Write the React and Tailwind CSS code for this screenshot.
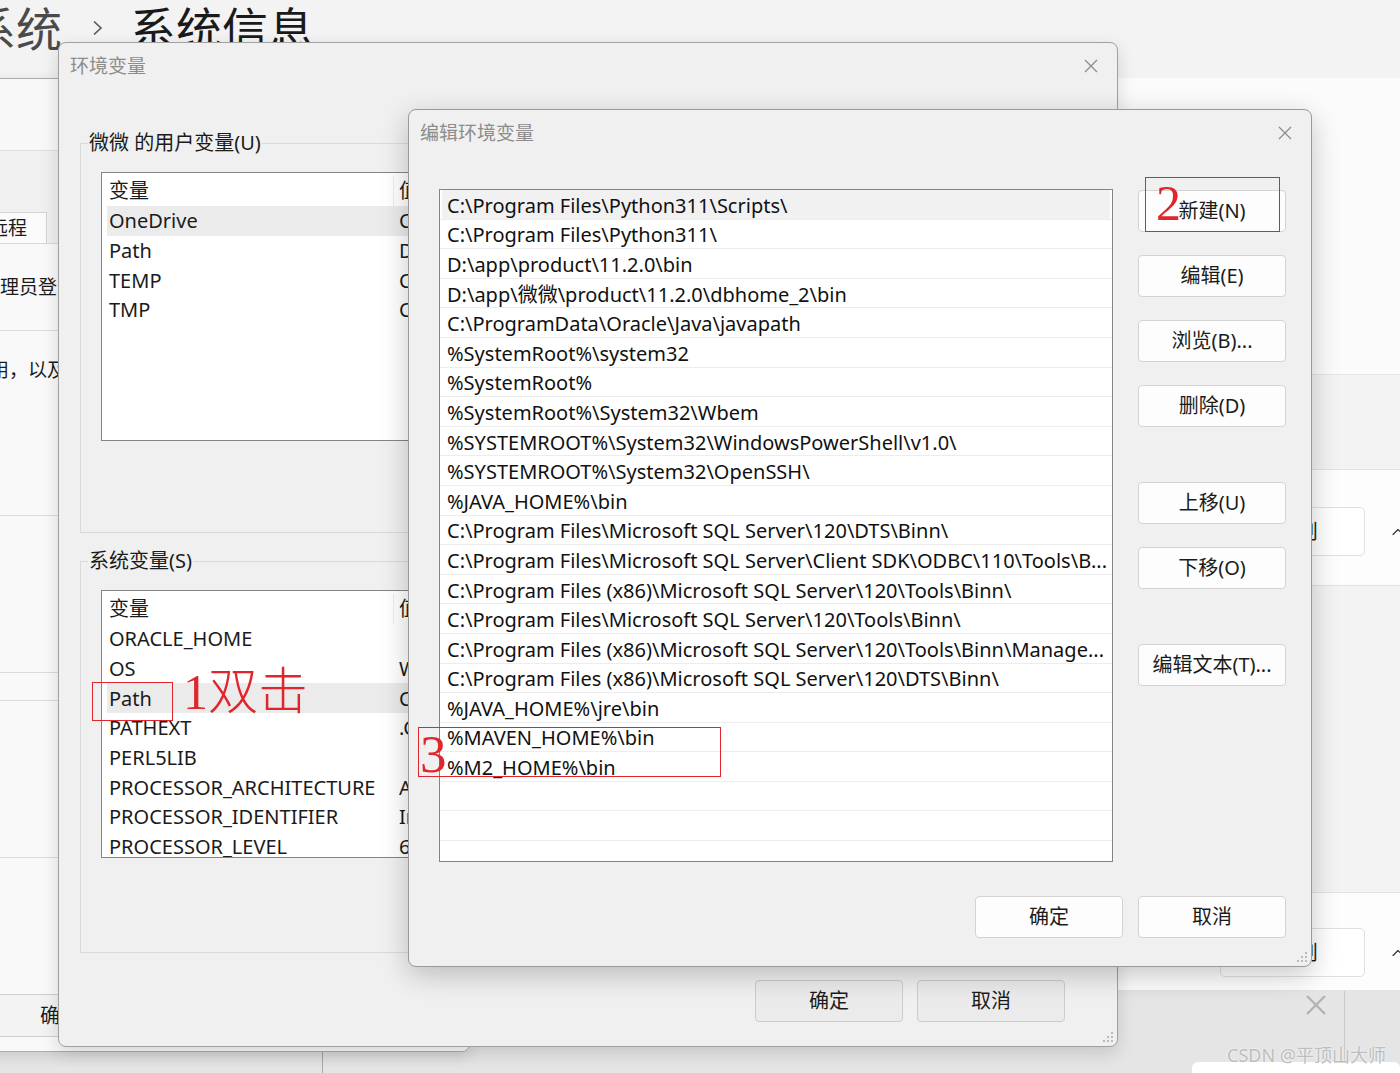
import React from 'react';
import { ChevronUp } from 'lucide-react';

const SANS = "font-['Noto_Sans','Noto_Sans_CJK_SC',sans-serif]";
const SERIF = "font-['Liberation_Serif','Noto_Sans_CJK_SC',serif]";

const userVars = [
  ['OneDrive', 'C:\\Users\\微微\\OneDrive'],
  ['Path', 'D:\\app\\微微\\product\\11.2.0\\dbhome_2\\bin;C:\\Users\\微微\\AppData\\Local\\Microsoft\\WindowsApps;'],
  ['TEMP', 'C:\\Users\\微微\\AppData\\Local\\Temp'],
  ['TMP', 'C:\\Users\\微微\\AppData\\Local\\Temp'],
];

const sysVars = [
  ['ORACLE_HOME', ''],
  ['OS', 'Windows_NT'],
  ['Path', 'C:\\Program Files\\Python311\\Scripts\\;C:\\Program Files\\Python311\\;'],
  ['PATHEXT', '.COM;.EXE;.BAT;.CMD;.VBS;.VBE;.JS;.JSE;.WSF;.WSH;.MSC;.PY;.PYW'],
  ['PERL5LIB', ''],
  ['PROCESSOR_ARCHITECTURE', 'AMD64'],
  ['PROCESSOR_IDENTIFIER', 'Intel64 Family 6 Model 154 Stepping 3, GenuineIntel'],
  ['PROCESSOR_LEVEL', '6'],
];

const paths = [
  'C:\\Program Files\\Python311\\Scripts\\',
  'C:\\Program Files\\Python311\\',
  'D:\\app\\product\\11.2.0\\bin',
  'D:\\app\\微微\\product\\11.2.0\\dbhome_2\\bin',
  'C:\\ProgramData\\Oracle\\Java\\javapath',
  '%SystemRoot%\\system32',
  '%SystemRoot%',
  '%SystemRoot%\\System32\\Wbem',
  '%SYSTEMROOT%\\System32\\WindowsPowerShell\\v1.0\\',
  '%SYSTEMROOT%\\System32\\OpenSSH\\',
  '%JAVA_HOME%\\bin',
  'C:\\Program Files\\Microsoft SQL Server\\120\\DTS\\Binn\\',
  'C:\\Program Files\\Microsoft SQL Server\\Client SDK\\ODBC\\110\\Tools\\B...',
  'C:\\Program Files (x86)\\Microsoft SQL Server\\120\\Tools\\Binn\\',
  'C:\\Program Files\\Microsoft SQL Server\\120\\Tools\\Binn\\',
  'C:\\Program Files (x86)\\Microsoft SQL Server\\120\\Tools\\Binn\\Manage...',
  'C:\\Program Files (x86)\\Microsoft SQL Server\\120\\DTS\\Binn\\',
  '%JAVA_HOME%\\jre\\bin',
  '%MAVEN_HOME%\\bin',
  '%M2_HOME%\\bin',
  '',
  '',
  '',
];

function CloseX() {
  return (
    <svg width="16" height="16" viewBox="0 0 16 16" className="shrink-0">
      <path d="M2 2L14 14M14 2L2 14" stroke="#8a8a8a" strokeWidth="1.2" fill="none" />
    </svg>
  );
}

function Grip() {
  const dots = [[8, 0], [4, 4], [8, 4], [0, 8], [4, 8], [8, 8]];
  return (
    <svg width="10" height="10" viewBox="0 0 10 10">
      {dots.map(([x, y], i) => (
        <rect key={i} x={x} y={y} width="2" height="2" fill="#b9b9b9" />
      ))}
    </svg>
  );
}

function WinButton({ children, dim }) {
  return (
    <div
      className={`w-[148px] h-[42px] shrink-0 flex items-center justify-center rounded-[4px] border text-[20px] text-[#1b1b1b] ${
        dim ? 'bg-[#ebebeb] border-[#cccccc]' : 'bg-[#fdfdfd] border-[#d3d3d3]'
      }`}
    >
      {children}
    </div>
  );
}

function VarList({ rows, selected, className }) {
  return (
    <div className={`w-[960px] bg-white border border-[#848484] overflow-hidden ${className}`}>
      <div className="h-[33px] flex items-center pt-[3px]">
        <div className="w-[292px] shrink-0 h-full flex items-center pl-[7px] border-r border-[#ececec]">变量</div>
        <div className="pl-[5px]">值</div>
      </div>
      {rows.map(([name, value], i) => (
        <div
          key={name + i}
          className={`h-[29.7px] mx-[5px] pt-[1px] flex items-center whitespace-nowrap ${i === selected ? 'bg-[#ebebeb]' : ''}`}
        >
          <div className="w-[287px] shrink-0 pl-[2px]">{name}</div>
          <div className="pl-[5px] shrink-0">{value}</div>
        </div>
      ))}
    </div>
  );
}

function CardRow({ className }) {
  return (
    <div className={`shrink-0 bg-[#fdfdfd] border-y border-[#e2e2e2] ${className}`}>
      <div className="flex items-center gap-[23px] pl-[1220px]">
        <div className="w-[145px] h-[49px] shrink-0 flex items-center justify-center pl-[10px] rounded-[5px] border border-[#e0e0e0] bg-white text-[20px] text-[#1b1b1b]">
          复制
        </div>
        <ChevronUp size={20} strokeWidth={1.4} className="shrink-0 text-[#333]" />
      </div>
    </div>
  );
}

export default function App() {
  return (
    <div className={`relative w-[1400px] h-[1073px] overflow-hidden flex flex-col bg-[#f3f3f3] ${SANS}`}>
      {/* settings app behind everything */}
      <div className="h-[78px] shrink-0 pt-[5px]">
        <div className="flex items-center gap-[30px] ml-[-30px] text-[46px] leading-none">
          <span className="text-[#4a4a4a]">系统</span>
          <svg width="11" height="16" viewBox="0 0 11 16" className="shrink-0">
            <path d="M2 1.5L9 8L2 14.5" stroke="#555" strokeWidth="1.6" fill="none" />
          </svg>
          <span className="text-[#1a1a1a] ml-[-3px]">系统信息</span>
        </div>
      </div>
      <div className="h-[297px] shrink-0 bg-[#fbfbfb] border-b border-[#e6e6e6]" />
      <div className="h-[94px] shrink-0" />
      <CardRow className="h-[117px] pt-[37px]" />
      <div className="h-[306px] shrink-0" />
      <CardRow className="h-[99px] pt-[35px]" />
      <div className="flex-1 flex bg-[#e5e5e5]">
        <div className="w-[323px] border-r border-[#a9a9a9]" />
        <div className="w-[982px]" />
        <svg width="22" height="22" viewBox="0 0 22 22" className="shrink-0 mt-[3px]">
          <path d="M2 2L20 20M20 2L2 20" stroke="#b3b3b3" strokeWidth="2.4" fill="none" />
        </svg>
        <div className="w-[18px] border-r border-[#c9c9c9]" />
      </div>
      <div className="absolute bottom-0 right-0 w-[208px] h-[11px] bg-white rounded-t-[6px]" />

      {/* 系统属性 (behind) */}
      <div className="absolute left-[-40px] top-[78px] w-[510px] h-[974px] bg-[#f0f0f0] border border-[#ababab] rounded-lg shadow-[0_4px_14px_rgba(0,0,0,0.12)] overflow-hidden flex flex-col text-[19px] text-[#1b1b1b]">
        <div className="h-[72px] shrink-0 bg-[#f8f8f8] border-b border-[#dedede]" />
        <div className="h-[92px] shrink-0 flex items-end">
          <div className="w-[86px] h-[31px] flex items-center pl-[27px] bg-[#fbfbfb] border border-b-0 border-[#d5d5d5]">远程</div>
        </div>
        <div className="flex-1 flex flex-col bg-[#f9f9f9] border-t border-[#d9d9d9]">
          <div className="h-[86px] shrink-0 flex items-center pl-[39px] whitespace-nowrap">理员登录。</div>
          <div className="h-[185px] shrink-0 border-t border-[#dcdcdc] pt-[25px] pl-[29px] whitespace-nowrap">用，以及虚拟内存</div>
          <div className="h-[157px] shrink-0 border-t border-[#dcdcdc]" />
          <div className="h-[28px] shrink-0 border-t border-[#dcdcdc]" />
          <div className="h-[157px] shrink-0 border-t border-[#dcdcdc]" />
          <div className="h-[123px] shrink-0 border-t border-[#dcdcdc]" />
          <div className="ml-[25px] mt-[14px] w-[148px] h-[43px] flex items-center justify-center rounded-[4px] border border-[#d0d0d0] bg-[#f3f3f3] text-[20px]">
            确定
          </div>
        </div>
      </div>

      {/* 环境变量 */}
      <div className="absolute left-[58px] top-[42px] w-[1060px] h-[1005px] bg-[#f0f0f0] border border-[#a0a0a0] rounded-lg shadow-[0_6px_18px_rgba(0,0,0,0.14)] flex flex-col text-[20px] text-[#1b1b1b]">
        <div className="h-[46px] shrink-0 flex items-center justify-between pl-[11px] pr-[18px]">
          <span className="text-[19px] text-[#8c8c8c]">环境变量</span>
          <CloseX />
        </div>
        <div className="px-[21px]">
          <fieldset className="mt-[40px] h-[404px] border border-[#dadada] pl-[7px]">
            <legend className="px-[1px] leading-[28px]">微微 的用户变量(U)</legend>
            <VarList rows={userVars} selected={0} className="ml-[13px] mt-[15px] h-[269px]" />
          </fieldset>
          <fieldset className="mt-[14px] h-[406px] border border-[#dadada] pl-[7px]">
            <legend className="px-[1px] leading-[28px]">系统变量(S)</legend>
            <VarList rows={sysVars} selected={2} className="ml-[13px] mt-[15px] h-[268px]" />
          </fieldset>
        </div>
        <div className="mt-[27px] flex justify-end gap-[14px] pr-[52px]">
          <WinButton dim>确定</WinButton>
          <WinButton dim>取消</WinButton>
        </div>
        <div className="absolute right-[4px] bottom-[4px]">
          <Grip />
        </div>
      </div>

      {/* 编辑环境变量 */}
      <div className="absolute left-[408px] top-[109px] w-[904px] h-[858px] bg-[#f0f0f0] border border-[#9a9a9a] rounded-lg shadow-[0_8px_28px_rgba(0,0,0,0.22)] flex flex-col text-[20px] text-[#111]">
        <div className="h-[46px] shrink-0 flex items-center justify-between pl-[11px] pr-[18px]">
          <span className="text-[19px] text-[#8c8c8c]">编辑环境变量</span>
          <CloseX />
        </div>
        <div className="mt-[33px] flex pl-[30px] gap-[25px]">
          <div className="w-[674px] h-[673px] shrink-0 bg-white border border-[#848484] overflow-hidden">
            {paths.map((p, i) => (
              <div key={i} className="h-[29.6px] border-b border-[#ededed]">
                <div
                  className={`h-full mx-[2px] pl-[5px] pt-[3px] flex items-center whitespace-nowrap overflow-hidden ${
                    i === 0 ? 'bg-[#f1f1f1]' : ''
                  }`}
                >
                  {p}
                </div>
              </div>
            ))}
          </div>
          <div className="mt-[1px] flex flex-col gap-[23px]">
            <WinButton>新建(N)</WinButton>
            <WinButton>编辑(E)</WinButton>
            <WinButton>浏览(B)...</WinButton>
            <WinButton>删除(D)</WinButton>
            <div className="mt-[32px]">
              <WinButton>上移(U)</WinButton>
            </div>
            <WinButton>下移(O)</WinButton>
            <div className="mt-[32px]">
              <WinButton>编辑文本(T)...</WinButton>
            </div>
          </div>
        </div>
        <div className="mt-[34px] flex justify-end gap-[15px] pr-[25px]">
          <WinButton>确定</WinButton>
          <WinButton>取消</WinButton>
        </div>
        <div className="absolute right-[4px] bottom-[4px]">
          <Grip />
        </div>
      </div>

      {/* red annotations */}
      <div className="absolute left-[92px] top-[682px] w-[81px] h-[39px] border-[1.5px] border-[#e0262a]" />
      <div className={`absolute left-[183px] top-[662px] flex items-baseline leading-none text-[#e0262a] ${SERIF}`}>
        <span className="text-[50px]">1</span>
        <span className="text-[50px] font-light font-['Noto_Sans_CJK_SC',sans-serif]">双击</span>
      </div>
      <div className="absolute left-[1145px] top-[177px] w-[135px] h-[55px] border-[1.5px] border-[#e0262a]" />
      <div className={`absolute left-[1156px] top-[178px] text-[50px] leading-none text-[#e0262a] ${SERIF}`}>2</div>
      <div className="absolute left-[418px] top-[727px] w-[303px] h-[50px] border-[1.5px] border-[#e0262a]" />
      <div className={`absolute left-[420px] top-[728px] text-[53px] leading-none text-[#e0262a] ${SERIF}`}>3</div>

      {/* watermark */}
      <div className="absolute left-[1227px] top-[1043px] text-[18px] leading-[24px] text-[#bdbdbd] [text-shadow:0_0_2px_#ffffff]">
        CSDN @平顶山大师
      </div>
    </div>
  );
}
